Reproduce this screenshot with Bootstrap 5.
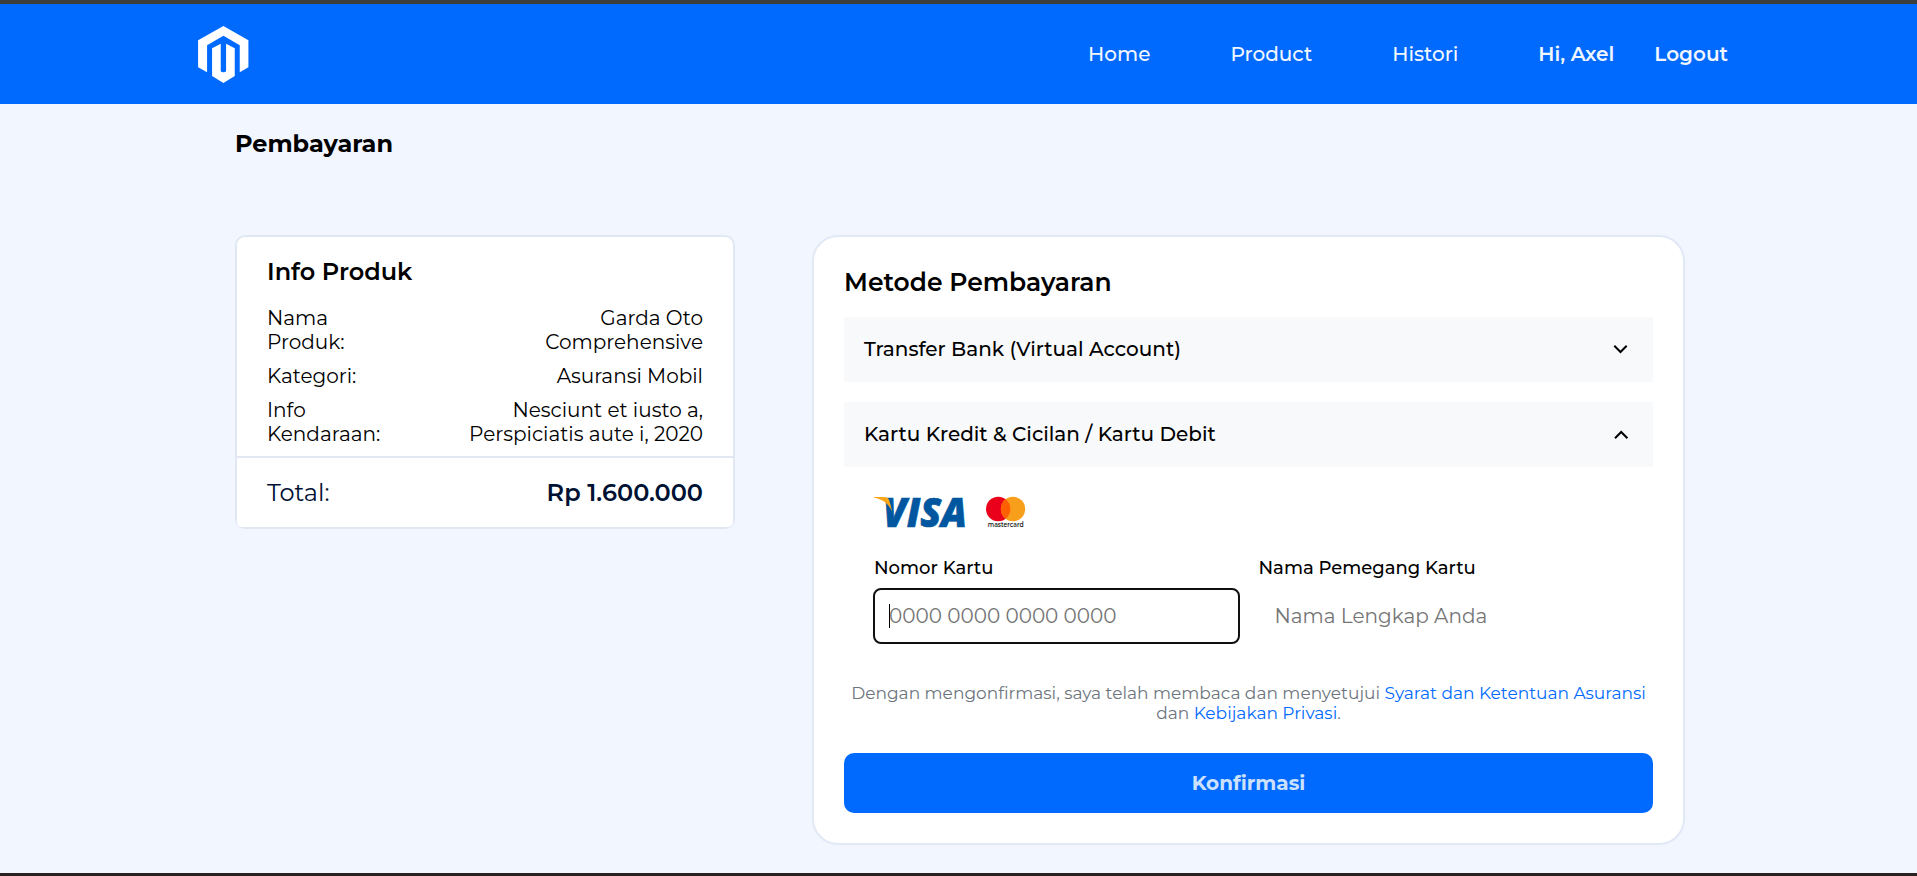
<!DOCTYPE html>
<html lang="id">
<head>
<meta charset="utf-8">
<meta name="viewport" content="width=device-width, initial-scale=1">
<title>Pembayaran</title>
<link rel="stylesheet" href="https://cdn.jsdelivr.net/npm/bootstrap@5.3.0/dist/css/bootstrap.min.css">
<style>
  body { font-family: Montserrat, "Open Sans", sans-serif; font-size: 20px; line-height: 24px; color: #000; background: #f1f6ff; min-height: 876px; border-top: 4px solid #3d3d3d; border-bottom: 3px solid #28211f; overflow: hidden; }
  .site-nav { height: 100px; background: #006aff; padding: 0 189px 0 198px; }
  .site-nav .navbar-nav { gap: 80px; }
  .site-nav .nav-link { color: #f1f6ff; font-weight: 500; padding: 0; }
  .site-nav .strong-link { font-weight: 600; }
  .account-links { gap: 40px; }
  .page { padding: 25px 234px 30px 235px; }
  .page-title { font-size: 24px; line-height: 29px; font-weight: 700; margin-bottom: 77px; }
  .info-card { width: 500px; height: 294px; border: 2px solid #e1e8f4; border-radius: 10px; }
  .info-card .card-body { padding: 20px 30px 10px; }
  .info-card .card-footer { background: #fff; border-top: 2px solid #e1e8f4; padding: 0 30px; height: 71px; font-size: 24px; line-height: 29px; color: #001233; }
  .info-title { font-size: 24px; line-height: 29px; font-weight: 600; margin-bottom: 20px; }
  .info-rows { gap: 10px; }
  .pay-card { width: 869px; margin: 2px 0 0; border: 0; border-radius: 24px; padding: 30px; box-shadow: 0 0 1px 2px #e1e8f4; }
  .pay-title { font-size: 25px; line-height: 30px; font-weight: 600; margin-bottom: 20px; }
  .method { height: 65px; padding: 0 20px 1px; background: #f8f9fb; border: 0; border-radius: 0; font-weight: 500; color: #000; width: 100%; }
  .method + .method { margin-top: 20px; }
  .panel { padding: 30px 30px 39px; }
  .fields { display: grid; grid-template-columns: 1fr 1fr; gap: 20px; margin-top: 28px; }
  .fields label { font-size: 18px; line-height: 22px; font-weight: 500; margin-bottom: 9px; display: block; }
  .fields .form-control { height: 56px; border: 2px solid transparent; border-radius: 8px; padding: 0 14px; font-size: 20px; line-height: 24px; background: #fff; }
  .fields .form-control::placeholder { color: #757575; opacity: 1; }
  .fields .active-input { border-color: #101010; margin: 0 -1px; width: calc(100% + 2px); }
  .caret-bar { left: 15px; top: 16px; width: 1px; height: 24px; background: #000; }
  .terms { font-size: 17px; line-height: 20px; color: #6c757d; margin: 0 0 30px; }
  .terms a { color: #006aff; text-decoration: none; }
  .confirm { height: 60px; border: 0; border-radius: 10px; background: #006aff; color: #cce1ff; font-size: 20px; line-height: 24px; font-weight: 700; }
</style>
</head>
<body>
<nav class="site-nav d-flex align-items-center justify-content-between">
  <a href="#" class="d-block lh-1" aria-label="Beranda">
    <svg class="d-block" width="50.5" height="57" viewBox="24 24 151 171" fill="#fff">
      <path d="M100 24L175 67V148L149 163V82L100 53.500 51 82V163L24 148V67Z"/>
      <path d="M66 91L92 77V158Q92 163 100 163T108 158V77L134 91V174L100 195 66 174Z"/>
    </svg>
  </a>
  <div class="navbar-nav flex-row">
    <a class="nav-link" href="#">Home</a>
    <a class="nav-link" href="#">Product</a>
    <a class="nav-link" href="#">Histori</a>
    <div class="account-links d-flex">
      <a class="nav-link strong-link" href="#">Hi, Axel</a>
      <a class="nav-link strong-link" href="#">Logout</a>
    </div>
  </div>
</nav>

<main class="page">
  <h1 class="page-title">Pembayaran</h1>
  <div class="d-flex justify-content-between align-items-start">
    <section class="card info-card text-black">
      <div class="card-body">
        <h2 class="info-title">Info Produk</h2>
        <div class="info-rows d-flex flex-column">
          <div class="d-flex justify-content-between"><span>Nama<br>Produk:</span><span class="text-end">Garda Oto<br>Comprehensive</span></div>
          <div class="d-flex justify-content-between"><span>Kategori:</span><span class="text-end">Asuransi Mobil</span></div>
          <div class="d-flex justify-content-between"><span>Info<br>Kendaraan:</span><span class="text-end">Nesciunt et iusto a,<br>Perspiciatis aute i, 2020</span></div>
        </div>
      </div>
      <div class="card-footer d-flex justify-content-between align-items-center">
        <span>Total:</span><span class="fw-semibold">Rp 1.600.000</span>
      </div>
    </section>

    <section class="card pay-card text-black">
      <h2 class="pay-title">Metode Pembayaran</h2>
      <button type="button" class="method d-flex justify-content-between align-items-center">
        <span>Transfer Bank (Virtual Account)</span>
        <svg width="24" height="24" viewBox="0 0 24 24" fill="none" stroke="#000" stroke-width="2"><path d="M5.300 8.700L11.500 15 17.700 8.700"/></svg>
      </button>
      <button type="button" class="method d-flex justify-content-between align-items-center">
        <span>Kartu Kredit &amp; Cicilan / Kartu Debit</span>
        <svg width="24" height="24" viewBox="0 0 24 24" fill="none" stroke="#000" stroke-width="2"><path d="M6 16.300L12.200 10 18.400 16.300"/></svg>
      </button>
      <div class="panel">
        <div class="d-flex">
          <svg class="d-block" width="112" height="30" viewBox="0 0 112 30" overflow="visible">
            <text x="9" y="29.500" font-family="Open Sans" font-weight="800" font-style="italic" font-size="41" fill="#00579f" stroke="#00579f" stroke-width=".7" textLength="84" lengthAdjust="spacingAndGlyphs">VISA</text>
            <path d="M0 0H9C12.500 0 14.500 .8 15.500 4L18.200 14.500C14.500 6.500 8 2 0 .8Z" fill="#faa61a"/>
          </svg>
          <svg class="d-block" width="40" height="32" viewBox="0 0 40 32" overflow="visible">
            <circle cx="12.200" cy="12" r="12.200" fill="#eb001b"/>
            <circle cx="27" cy="12" r="12.200" fill="#f79e1b"/>
            <path d="M19.600 2.300A12.200 12.200 0 0 1 19.600 21.700A12.200 12.200 0 0 1 19.600 2.300Z" fill="#ff5f00"/>
            <text x="1.800" y="29.800" font-family="Montserrat" font-weight="600" font-size="6.800" fill="#231f20" textLength="35.800" lengthAdjust="spacingAndGlyphs">mastercard</text>
          </svg>
        </div>
        <div class="fields">
          <div>
            <label for="nomor">Nomor Kartu</label>
            <div class="position-relative">
              <input id="nomor" class="form-control active-input" placeholder="0000 0000 0000 0000">
              <span class="caret-bar position-absolute"></span>
            </div>
          </div>
          <div>
            <label for="nama">Nama Pemegang Kartu</label>
            <input id="nama" class="form-control" placeholder="Nama Lengkap Anda">
          </div>
        </div>
      </div>
      <p class="terms text-center">Dengan mengonfirmasi, saya telah membaca dan menyetujui <a href="#">Syarat dan Ketentuan Asuransi</a> dan <a href="#">Kebijakan Privasi</a>.</p>
      <button type="button" class="confirm btn w-100">Konfirmasi</button>
    </section>
  </div>
</main>
<script src="https://cdn.jsdelivr.net/npm/bootstrap@5.3.0/dist/js/bootstrap.bundle.min.js"></script>
</body>
</html>
